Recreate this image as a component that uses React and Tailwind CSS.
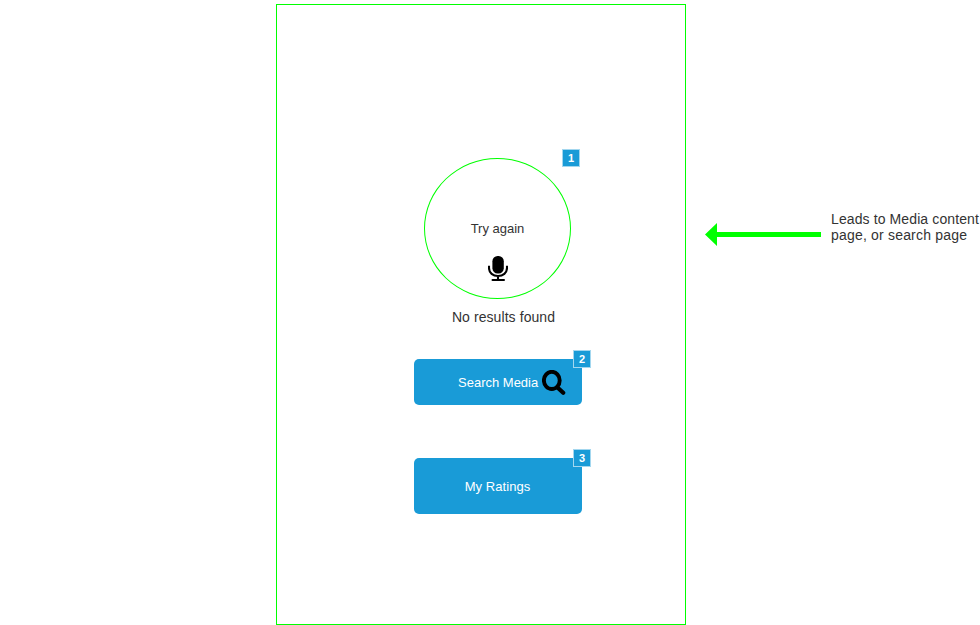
function Badge({ children, className }) {
  return (
    <span
      className={`absolute flex h-[18px] w-[18px] items-center justify-center border border-[#a3d7ef] bg-[#199bd7] text-[11px] leading-none font-bold text-white ${className}`}
    >
      {children}
    </span>
  );
}

function MicIcon() {
  return (
    <svg width="20" height="25" viewBox="0 0 20 25" fill="none">
      <rect x="4.400" y="0" width="11.400" height="17.500" rx="5.200" fill="#000" />
      <path d="M1 9.800v2.200C1 17 5 20 10 20s9-3 9-8V9.800M10 20v3.500" stroke="#000" strokeWidth="2.100" />
      <path d="M4.500 24h11.500" stroke="#000" strokeWidth="2" strokeLinecap="round" />
    </svg>
  );
}

function SearchIcon() {
  return (
    <svg width="24" height="26" viewBox="0 0 24 26" fill="none" stroke="#000">
      <ellipse cx="9.800" cy="10.400" rx="7.900" ry="8.600" strokeWidth="3.900" />
      <path d="M15.500 17.500L21.200 22.800" strokeWidth="4.200" strokeLinecap="round" />
    </svg>
  );
}

export default function App() {
  return (
    <div className="flex h-[625px] w-[980px] overflow-hidden bg-white pt-1 pl-[276px] font-['Liberation_Sans',Arial,sans-serif] text-[#333333]">
      <main className="flex h-[621px] w-[410px] shrink-0 flex-col border border-[#00ff00] pt-[153px] pl-[137px]">
        <div className="flex w-[168px] flex-col items-center">
          <button className="relative ml-[-1px] flex h-[141px] w-[147px] flex-col items-center rounded-[50%] border border-[#00ff00] pt-[62px]">
            <span className="text-[13px] leading-4">Try again</span>
            <span className="mt-[19px]"><MicIcon /></span>
            <Badge className="top-[-10px] left-[137px]">1</Badge>
          </button>
          <p className="mt-[10px] ml-[11px] text-[14px] leading-4 tracking-[0.08px] whitespace-nowrap">No results found</p>
        </div>
        <button className="relative mt-[34px] flex h-[46px] w-[168px] items-center rounded-[5px] bg-[#199bd7] pt-[2px] pl-11 text-[13px] leading-4 text-white">
          <span className="w-[84px] text-left whitespace-nowrap">Search Media</span>
          <SearchIcon />
          <Badge className="top-[-9px] left-[159px]">2</Badge>
        </button>
        <button className="relative mt-[53px] flex h-[56px] w-[168px] items-center justify-center rounded-[5px] bg-[#199bd7] pt-[2px] pr-px text-[13px] leading-4 tracking-[0.05px] text-white">
          My Ratings
          <Badge className="top-[-9px] left-[159px]">3</Badge>
        </button>
      </main>
      <aside className="flex shrink-0 pt-[207px] pl-[19px]">
        <svg className="mt-3" width="116" height="24" viewBox="0 0 116 24" fill="#00ff00">
          <path d="M0 11.500L12 0V9H116V14H12V23Z" />
        </svg>
        <p className="ml-[10px] text-[14px] leading-4 tracking-[0.11px] whitespace-nowrap">
          Leads to Media content
          <br />
          <span className="tracking-[0.19px]">page, or search page</span>
        </p>
      </aside>
    </div>
  );
}
